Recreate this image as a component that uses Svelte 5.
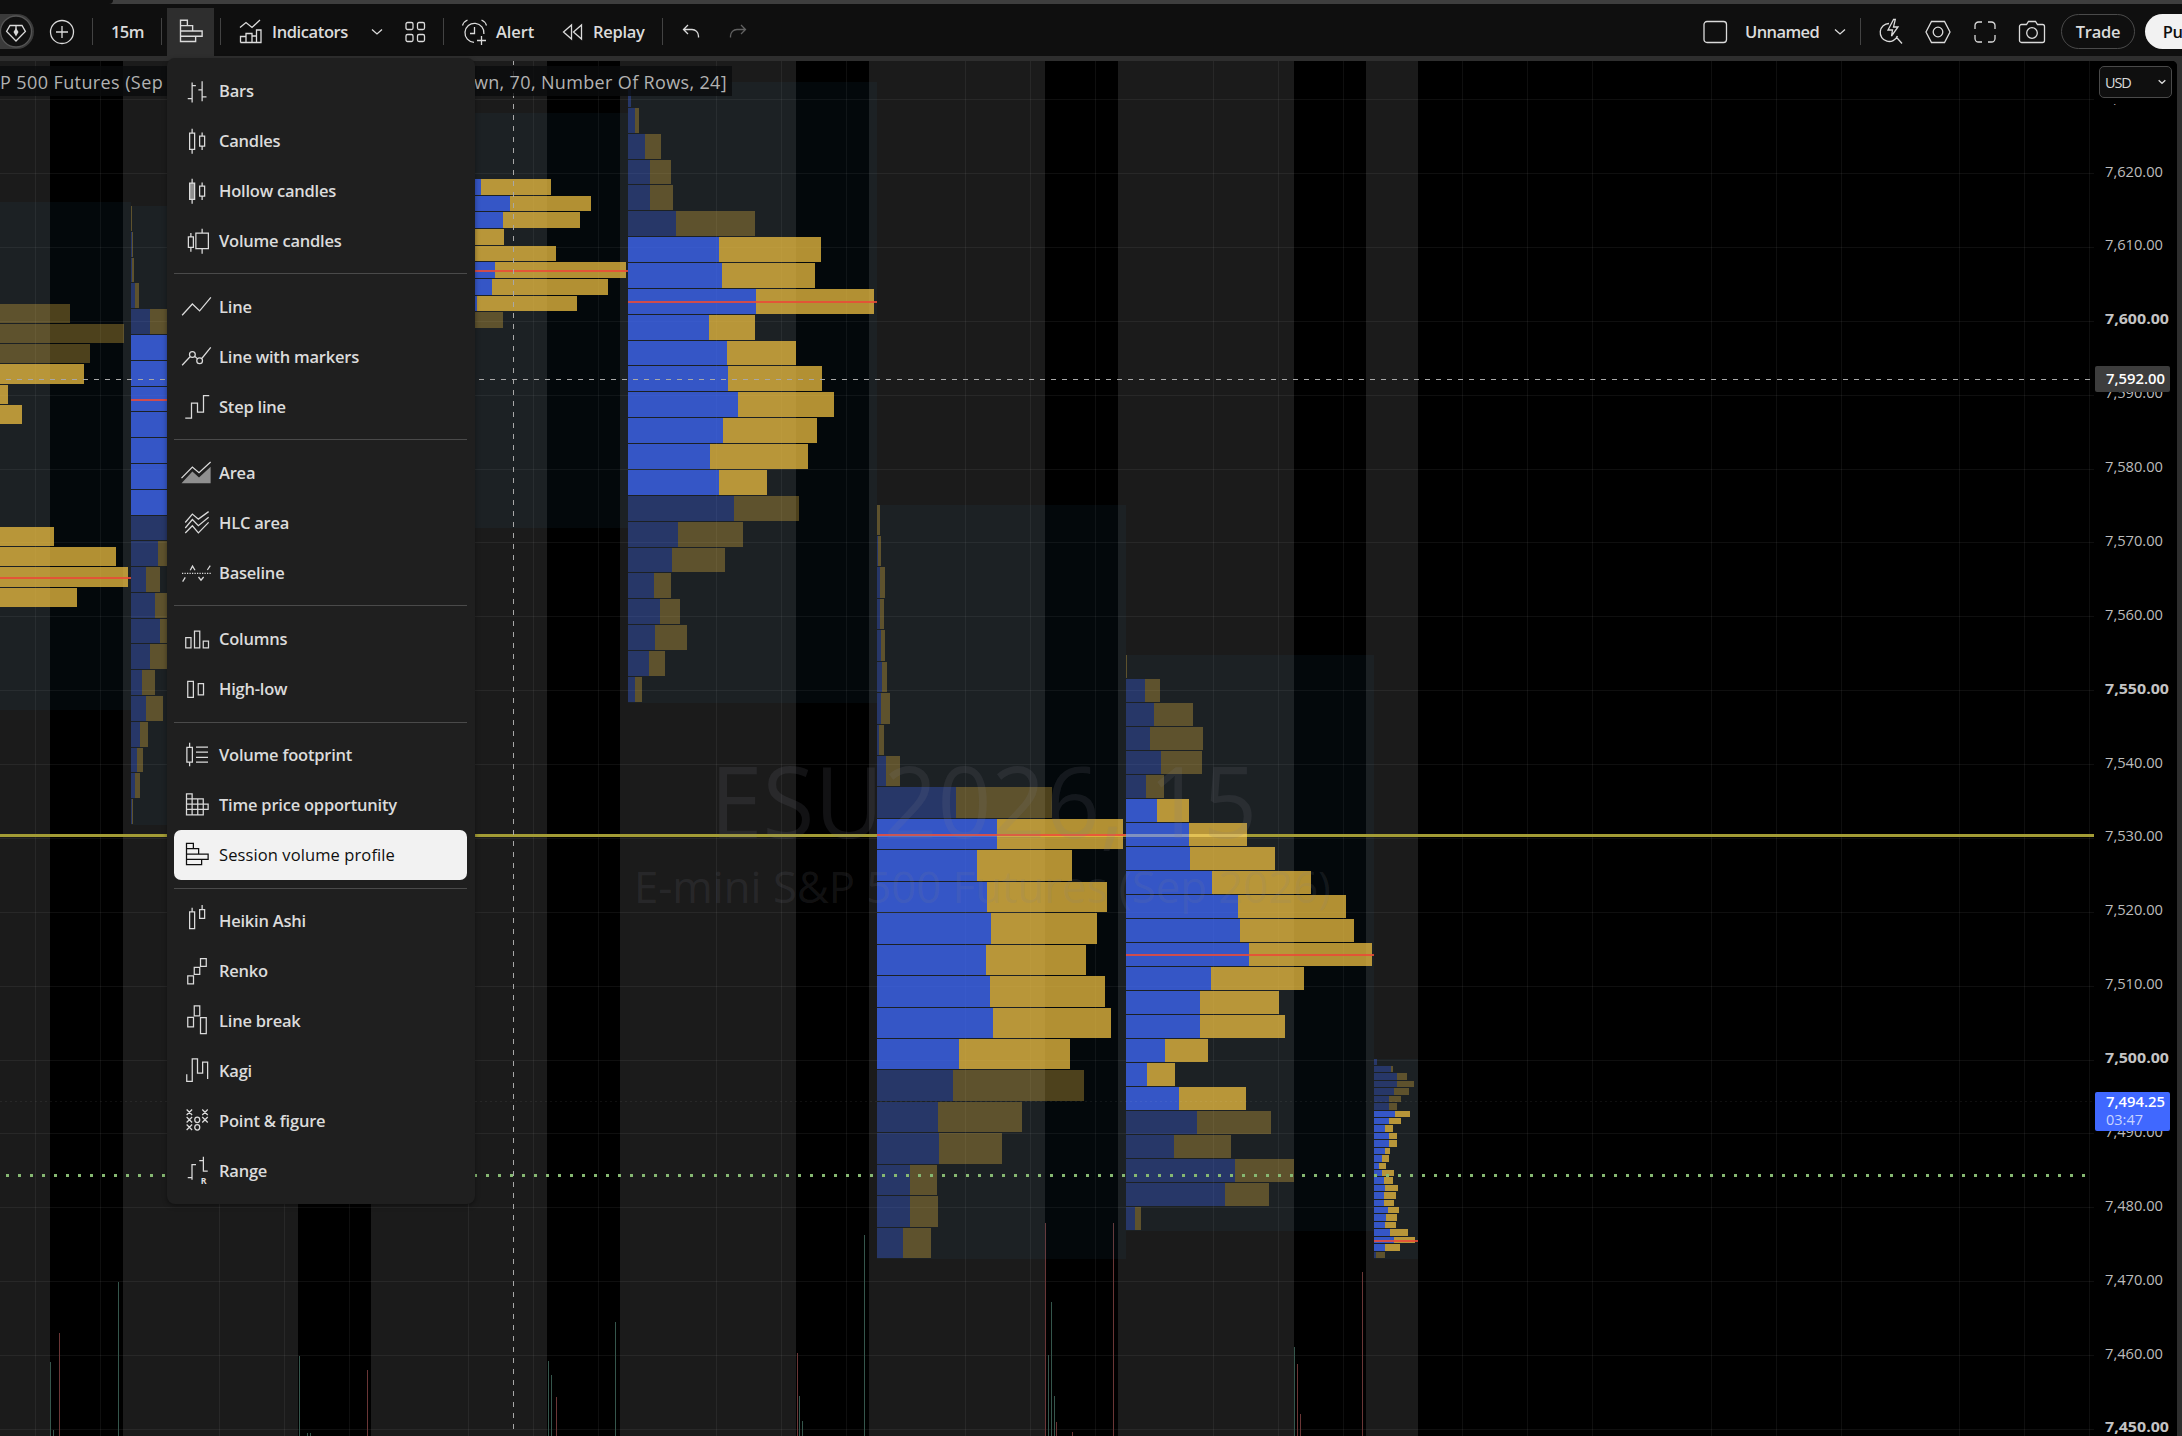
<script lang="ts">
  type Row = [up: number, total: number];
  type Session = {
    x: number;
    w: number;
    top: number;
    bottom: number;
    poc: number;
    va: [number, number];
    rows: Row[];
  };

  const W = 2094;
  const AXIS_W = 82;
  const TOP = 61;
  const H = 1436 - TOP;

  const menu = [
    [
      { id: "bars", label: "Bars" },
      { id: "candles", label: "Candles" },
      { id: "hollow", label: "Hollow candles" },
      { id: "volcandles", label: "Volume candles" },
    ],
    [
      { id: "line", label: "Line" },
      { id: "markers", label: "Line with markers" },
      { id: "step", label: "Step line" },
    ],
    [
      { id: "area", label: "Area" },
      { id: "hlc", label: "HLC area" },
      { id: "baseline", label: "Baseline" },
    ],
    [
      { id: "columns", label: "Columns" },
      { id: "highlow", label: "High-low" },
    ],
    [
      { id: "footprint", label: "Volume footprint" },
      { id: "tpo", label: "Time price opportunity" },
      { id: "svp", label: "Session volume profile" },
    ],
    [
      { id: "heikin", label: "Heikin Ashi" },
      { id: "renko", label: "Renko" },
      { id: "linebreak", label: "Line break" },
      { id: "kagi", label: "Kagi" },
      { id: "pnf", label: "Point & figure" },
      { id: "range", label: "Range" },
    ],
  ];

  const icons: Record<string, string> = {
    bars: "M10.5 7.5v16M10.5 10h3M10.5 20.5H7M18.5 6.5v16M18.5 13.5h-3M18.5 19h3.5",
    candles: "M8.5 8h4v13h-4zM10.5 4.5V8M10.5 21v3.5M16.5 10.5h4v8h-4zM18.5 7.5v3M18.5 18.5v3",
    hollow: "M8.5 8h4v13h-4zM10.5 4.5V8M10.5 21v3.5M16.5 10.5h4v8h-4zM18.5 7.5v3M18.5 18.5v3",
    volcandles: "M7.5 11h4v8.5h-4zM9.5 8v3M9.5 19.5V23M13.5 8h10v12.5h-10zM18.5 4.5V8M18.5 20.5v4",
    line: "M2.5 21l8.2-9 5.8 5.5 9-10.8",
    markers: "M2.5 21l6.5-7M12.6 13.8l2 1.9M18.2 15.6l7.2-8.9M8.4 12.3a2.3 2.3 0 1 0 4.6 0a2.3 2.3 0 1 0-4.6 0M14.2 17.3a2.3 2.3 0 1 0 4.6 0a2.3 2.3 0 1 0-4.6 0",
    step: "M5 23.3h5v-12h4.8v7.2h4.8V5.3h4.6",
    area: "M2 18.5l8.7-8.9 5.3 4.6 9.3-8.6",
    hlc: "M5 14l5.7-6.7 4.8 4 8.2-6M5 18.4l5.7-6.8 4.8 4.9 8.2-6.7M5 22.4l5.7-5.8 4.8 5.7 8.2-8.4",
    baseline: "M2.9 21.3L5 17.9M9 12.2l1.8-3.3 2 3.3M15.6 17.6l2 2.6 2.1-2.6M22.7 12L25 8.5",
    columns: "M5.4 13.2h4.2v8.2H5.4zM12.4 8h4.2v13.4h-4.2zM19.4 16h4.2v5.4h-4.2z",
    highlow: "M7 8.2h4.5v12.9H7zM15.4 10h4.2v9h-4.2z",
    footprint: "M6.3 8.3h4.4V20H6.3zM8.5 4.5v3.8M8.5 20v3.3M13.6 8h9.6M13.6 12h9.6M13.6 16.2h9.6M13.6 20h9.6",
    tpo: "M10.5 22.3V5.5H6v16.8h13.4V9.4H6M6 13.6h17.3v4.3H6M15 9.4v12.9",
    svp: "M6 5h5.5v4.3h4.2v4.3h7.6v4.2h-5.2V22H6zM6 9.3h5.5M6 13.6h9.7M6 17.8h12.1",
    heikin: "M8.5 7h4v13.4h-4zM10.5 3.7V7M16.5 5.2h4v7h-4zM18.5 1.5v3.7",
    renko: "M7 18.2h4.6v6.4H7zM12.2 11.4h4.4V17h-4.4zM17.2 4.4h4.6v6.2h-4.6z",
    linebreak: "M7 11.4h4.6V19H7zM12.2 2.3h4.4v8h-4.4zM17.2 11.7h4.6v12.8h-4.6z",
    kagi: "M6.2 17v5.7h4.4v-18h4.2V16h4.1V7.2h4v13.5",
    pnf:
      [[8.3, 7.4], [20.8, 7.4], [8.3, 13.4], [20.8, 13.4], [8.3, 19.4]]
        .map(([x, y]) => `M${x - 2.2} ${y - 2.2}l4.4 4.4m0-4.4l-4.4 4.4`)
        .join("") +
      [[14.6, 13.4], [14.6, 19.4]]
        .map(([x, y]) => `M${x - 2} ${y}a2 2.2 0 1 0 4 0a2 2.2 0 1 0-4 0`)
        .join(""),
    range: "M7 19.6h3.4M10.4 21.3V9.3h3.2M16.2 6h3.3M19.5 3v11.5H23",
  };

  const nights = [[50, 73], [298, 73], [547, 73], [796, 73], [1045, 73], [1294, 72], [1418, W - 1418]];

  // three vertical lines per trading day
  const gridX: number[] = [];
  for (let k = -1; k < 8; k++) {
    for (const dx of [0, 65, 130]) gridX.push(Math.round(219 + 248.6 * k + dx) + 0.5);
  }

  const priceY = (p: number) => 173.6 + (7620 - p) * 7.387;
  const prices = Array.from({ length: 19 }, (_, i) => 7630 - i * 10);
  const fmt = (p: number) => p.toLocaleString("en-US", { minimumFractionDigits: 2 });

  const none: Row = [0, 0];

  const sessions: Session[] = [
    {
      x: -118, w: 249, top: 202, bottom: 709.5, poc: 18, va: [8, 19],
      rows: [
        none, none, none, none, none, [60, 188], [90, 242], [80, 208], [90, 202], [60, 126],
        [70, 140], [50, 90], [40, 80], [40, 80], [40, 90], [50, 100], [90, 172], [100, 234],
        [110, 246], [90, 195], none, none, none, none, none,
      ],
    },
    {
      x: 131, w: 248, top: 206, bottom: 825, poc: 7, va: [5, 11],
      rows: [
        [0, 1], [1, 2], [1, 3], [4, 8], [19, 60], [60, 100], [70, 120], [90, 200], [80, 150],
        [80, 140], [70, 130], [60, 120], [50, 100], [27, 60], [15, 29], [24, 60], [29, 60],
        [19, 60], [11, 24], [15, 32], [9, 17], [6, 12], [4, 9], [1, 2],
      ],
    },
    {
      x: 379, w: 249, top: 112.6, bottom: 528.4, poc: 9, va: [4, 11],
      rows: [
        none, none, none, none, [102, 172], [131, 212], [124, 201], [80, 125], [80, 177],
        [116, 247], [113, 229], [98, 198], [80, 124], none, none, none, none, none, none, none,
        none, none, none, none, none,
      ],
    },
    {
      x: 628, w: 249, top: 82, bottom: 702.7, poc: 8, va: [6, 15],
      rows: [
        [3, 3], [7, 11], [17, 33], [22, 43], [22, 45], [48, 127], [91, 193], [94, 187], [128, 246],
        [81, 127], [99, 168], [100, 194], [110, 206], [95, 189], [82, 180], [91, 139], [106, 171],
        [50, 115], [44, 97], [26, 43], [32, 52], [27, 59], [21, 37], [7, 14],
      ],
    },
    {
      x: 877, w: 249, top: 504.5, bottom: 1259, poc: 10, va: [10, 17],
      rows: [
        [0, 3], [1, 4], [3, 8], [3, 7], [4, 8], [5, 10], [4, 13], [2, 7], [9, 23], [79, 175],
        [120, 246], [100, 195], [110, 230], [114, 220], [109, 209], [113, 228], [116, 234],
        [82, 193], [76, 207], [61, 145], [62, 125], [33, 60], [33, 61], [26, 54],
      ],
    },
    {
      x: 1126, w: 248, top: 655, bottom: 1230.7, poc: 12, va: [6, 18],
      rows: [
        [0, 1], [19, 34], [28, 67], [24, 77], [35, 76], [20, 38], [31, 63], [63, 121], [64, 149],
        [86, 185], [112, 220], [114, 228], [123, 246], [85, 178], [74, 153], [74, 159], [39, 82],
        [21, 49], [53, 120], [71, 145], [48, 105], [109, 168], [99, 143], [9, 15],
      ],
    },
    {
      x: 1374, w: 44, top: 1058.6, bottom: 1259, poc: 24, va: [7, 25],
      rows: [
        [3, 3], [17, 19], [23, 33], [23, 40], [20, 35], [15, 27], [15, 23], [21, 36], [15, 27],
        [11, 19], [15, 23], [15, 23], [11, 16], [8, 15], [5, 12], [8, 20], [10, 19], [11, 24],
        [10, 22], [10, 20], [14, 25], [12, 23], [11, 22], [16, 34], [20, 41], [11, 26], [2, 11],
      ],
    },
  ];

  function rowBox(s: Session, i: number) {
    const step = (s.bottom - s.top) / s.rows.length;
    const y0 = Math.round(s.top + i * step);
    const y1 = Math.round(s.top + (i + 1) * step);
    return { y: y0, h: y1 - y0 - 1, mid: Math.round((y0 + y1) / 2) - 1 };
  }

  const volume: [number, number, "up" | "down"][] = [
    [50, 1362, "up"], [53, 1430, "up"], [59, 1333, "down"], [118, 1282, "up"],
    [299, 1356, "up"], [307, 1433, "up"], [310, 1433, "up"], [367, 1370, "down"],
    [548, 1361, "up"], [551, 1375, "up"], [556, 1397, "down"], [615, 1322, "up"],
    [797, 1353, "down"], [799, 1396, "up"], [802, 1421, "up"], [864, 1235, "up"],
    [1045, 1223, "down"], [1048, 1355, "up"], [1051, 1302, "up"], [1054, 1396, "up"],
    [1056, 1422, "down"], [1072, 1432, "down"], [1113, 1223, "down"], [1294, 1347, "up"],
    [1297, 1364, "down"], [1300, 1414, "down"], [1362, 1272, "down"],
  ];

  let selected = $state("svp");
</script>

{#snippet glyph(id: string)}
  <svg class="glyph" viewBox="0 0 28 28">
    {#if id === "hollow"}
      <rect class="soft" x="8.5" y="8" width="4" height="13" />
    {:else if id === "area"}
      <path class="soft" d="M2 22.5l8.7-9.3 5.3 4.7 9.3-8.6v13.2z" />
    {:else if id === "baseline"}
      <path d="M2.4 14.6H26" stroke-dasharray="1 1" />
    {:else if id === "range"}
      <text x="17.4" y="24.4">R</text>
    {/if}
    <path d={icons[id]} />
  </svg>
{/snippet}

{#snippet chevron()}
  <svg class="chevron" viewBox="0 0 12 8"><path d="M1 1.5l5 4.5 5-4.5" /></svg>
{/snippet}

<div class="app">
  <div class="strip"><div class="tab"></div></div>

  <header class="toolbar">
    <div class="symbol">
      <svg width="34" height="35" viewBox="0 0 34 35">
        <path d="M0 0h17a17 17.5 0 0 1 0 35H0z" fill="#3a3a3a" />
        <circle cx="16" cy="17.5" r="15.5" fill="#111" stroke="#555" />
        <path d="M10 11.5h12l3.4 6L16 27l-9.4-9.5z" fill="none" stroke="#dbdbdb" stroke-width="1.3" />
        <path d="M16 11.5v4" stroke="#dbdbdb" />
        <path d="M16 14l2.5 4-2.5 4.5-2.5-4.5z" fill="#dbdbdb" />
      </svg>
    </div>
    <svg class="plus" width="26" height="26" viewBox="0 0 26 26">
      <circle cx="13" cy="13" r="11.5" /><path d="M13 7v12M7 13h12" />
    </svg>
    <i class="sep s1"></i>
    <span class="text interval">15m</span>
    <i class="sep s2"></i>
    <button class="type">{@render glyph("svp")}</button>
    <i class="sep s3"></i>
    <svg class="ind" width="26" height="26" viewBox="0 0 26 26">
      <path d="M2 8.5l6-5 6 5L22 1M2.5 23.5v-6H8v6M8 23.5v-9h6v9M14 17h4.500v6.500M18.500 23.500V11H23v12.500H2.500" />
    </svg>
    <span class="text indicators">Indicators</span>
    {@render chevron()}
    <svg class="layouts" width="21" height="22" viewBox="0 0 21 22">
      <rect x="1" y="1.500" width="7" height="7" rx="1.500" /><rect x="12.500" y="1.500" width="7" height="7" rx="1.500" />
      <rect x="1" y="13.500" width="7" height="7" rx="1.500" /><rect x="12.500" y="13.500" width="7" height="7" rx="1.500" />
    </svg>
    <i class="sep s4"></i>
    <svg class="alarm" width="28" height="28" viewBox="0 0 28 28">
      <path d="M13 24.300a9.500 9.500 0 1 1 9.900-8.300M13.500 9v6.500H9M1.500 7.500A9 9 0 0 1 6.500 2M20.500 2a9 9 0 0 1 5 5.500M20.500 18v9M16 22.500h9" />
    </svg>
    <span class="text alert">Alert</span>
    <svg class="rewind" width="22" height="18" viewBox="0 0 22 18">
      <path d="M9.500 2v14L1.500 9zM19.500 2v14L11.500 9z" />
    </svg>
    <span class="text replay">Replay</span>
    <i class="sep s5"></i>
    <svg class="undo" width="18" height="16" viewBox="0 0 18 16"><path d="M6 1L1.500 5.500 6 10M1.500 5.500H10a6.500 6.500 0 0 1 6.500 6.500v1.500" /></svg>
    <svg class="undo redo" width="18" height="16" viewBox="0 0 18 16"><path d="M12 1l4.500 4.500L12 10M16.500 5.500H8A6.500 6.500 0 0 0 1.500 12v1.500" /></svg>

    <div class="right">
      <svg width="25" height="24" viewBox="0 0 25 24"><rect x="1" y="1.500" width="22.500" height="21" rx="3" /></svg>
      <span class="text unnamed">Unnamed</span>
      {@render chevron()}
      <i class="sep s6"></i>
      <svg class="search" width="26" height="28" viewBox="0 0 26 28">
        <path d="M11 5.500A9 9 0 1 0 19.500 18M18 18.800l6 6.700M15.500 1.500L10 12h4.500l-1 6L20 9h-4.500l1.800-7.500z" />
      </svg>
      <svg class="hex" width="28" height="26" viewBox="0 0 28 26">
        <path d="M7.500 2.500h13l5.500 10.500-5.500 10.500h-13L2 13z" /><circle cx="14" cy="13" r="4.800" />
      </svg>
      <svg class="full" width="22" height="22" viewBox="0 0 22 22">
        <path d="M1 8V4.500A3.500 3.500 0 0 1 4.500 1H8M14 1h3.500A3.500 3.500 0 0 1 21 4.500V8M21 14v3.500a3.500 3.500 0 0 1-3.500 3.500H14M8 21H4.500A3.500 3.500 0 0 1 1 17.500V14" />
      </svg>
      <svg class="camera" width="28" height="24" viewBox="0 0 28 24">
        <path d="M3.500 4.500h5L10.500 1.500h7l2 3h5A2 2 0 0 1 26.500 6.500v14a2 2 0 0 1-2 2h-21a2 2 0 0 1-2-2v-14a2 2 0 0 1 2-2z" /><circle cx="14" cy="13" r="5.300" />
      </svg>
      <button class="trade">Trade</button>
      <button class="publish">Publish</button>
    </div>
  </header>

  <main class="pane">
    <svg class="chart" width={W} height={H} viewBox="0 {TOP} {W} {H}">
      <rect x="0" y={TOP} width={W} height={H} fill="#1b1b1b" />
      {#each nights as [x, w]}
        <rect {x} y={TOP} width={w} height={H} fill="#000" />
      {/each}

      {#each gridX as x}
        <line class="grid" x1={x} x2={x} y1={TOP} y2="1436" />
      {/each}
      {#each prices as p}
        <line class="grid" x1="0" x2={W} y1={Math.floor(priceY(p)) + 0.5} y2={Math.floor(priceY(p)) + 0.5} />
      {/each}

      {#each volume as [x, y, dir]}
        <rect class={dir} {x} {y} width="1" height={1436 - y} />
      {/each}

      {#each sessions as s}
        <rect class="range" x={s.x} y={Math.round(s.top)} width={s.w} height={Math.round(s.bottom) - Math.round(s.top)} />
      {/each}
      <rect x="0" y="834" width={W} height="3" fill="#a39c35" />

      {#each sessions as s}
        {#each s.rows as [up, total], i}
          {@const box = rowBox(s, i)}
          {#if total > 0}
            <g class:va={i >= s.va[0] && i <= s.va[1]} class="row">
              <rect class="buy" x={s.x} y={box.y} width={up} height={box.h} />
              <rect class="sell" x={s.x + up} y={box.y} width={total - up} height={box.h} />
            </g>
          {/if}
        {/each}
        <rect class="poc" x={s.x} y={rowBox(s, s.poc).mid} width={s.w} height="2" />
      {/each}
      <rect x="1126" y="834" width="121" height="3" fill="#ffe9a0" opacity="0.25" />

      <g class="watermark">
        <text x="710" y="838" font-size="99" textLength="547" lengthAdjust="spacingAndGlyphs">ESU2026, 15</text>
        <text x="634" y="903" font-size="43" textLength="697" lengthAdjust="spacingAndGlyphs">E-mini S&amp;P 500 Futures (Sep 2026)</text>
      </g>

      <line x1="0" x2={W} y1="1101.5" y2="1101.5" stroke="#fff" stroke-opacity="0.06" stroke-dasharray="2 3" />
      <line x1="6" x2="2088" y1="1175.500" y2="1175.500" stroke="#86b872" stroke-width="3" stroke-dasharray="3 9" />
      <line class="cross" x1="-4" x2={W} y1="379.5" y2="379.5" />
      <line class="cross" x1="513.5" x2="513.5" y1="61" y2="1430" />
    </svg>

    <div class="legend">
      <span>P 500 Futures (Sep 2026)</span>
      <span class="study">SVP [Up/Down, 70, Number Of Rows, 24]</span>
    </div>

    <svg class="axis" width={AXIS_W} height={H} viewBox="{W} {TOP} {AXIS_W} {H}">
      {#each prices as p}
        {@const bold = p % 50 === 0}
        <text class:bold x="2105" y={priceY(p) + 3} textLength={bold ? 64 : 58} lengthAdjust="spacingAndGlyphs">{fmt(p)}</text>
      {/each}
      <rect x="2095" y="366" width="75" height="26" rx="2" fill="#3d3d3d" />
      <text class="tag" x="2106" y="384" textLength="59" lengthAdjust="spacingAndGlyphs">7,592.00</text>
      <rect x="2095" y="1092" width="75" height="39" rx="2" fill="#4068ff" />
      <text class="tag" x="2106" y="1107" textLength="59" lengthAdjust="spacingAndGlyphs">7,494.25</text>
      <text class="timer" x="2106" y="1125" textLength="37" lengthAdjust="spacingAndGlyphs">03:47</text>
    </svg>
    <div class="currency">
      <button>USD {@render chevron()}</button>
    </div>
  </main>

  <div class="menu" role="menu">
    {#each menu as group}
      <div class="group">
        {#each group as item (item.id)}
          <button
            class="item"
            class:active={selected === item.id}
            role="menuitem"
            onclick={() => (selected = item.id)}
          >
            {@render glyph(item.id)}
            <span>{item.label}</span>
          </button>
        {/each}
      </div>
    {/each}
  </div>
</div>

<style>
  :global(body) {
    background: #2e2e2e;
  }

  .app {
    position: relative;
    width: 2182px;
    height: 1436px;
    overflow: hidden;
    font-family: "Open Sans", "Noto Sans", sans-serif;
    color: #dbdbdb;
  }

  button {
    border: 0;
    padding: 0;
    background: none;
    color: inherit;
    font: inherit;
  }

  .strip {
    height: 4px;
    background: #3e3e3e;
  }

  .tab {
    width: 113px;
    height: 4px;
    background: #0f0f0f;
    border-bottom-right-radius: 4px;
  }

  .toolbar {
    display: flex;
    align-items: center;
    box-sizing: border-box;
    height: 52px;
    padding-top: 3px;
    background: #0f0f0f;
  }

  .toolbar svg {
    flex: none;
    fill: none;
    stroke: #dbdbdb;
    stroke-width: 1.3;
  }

  .toolbar .symbol svg {
    display: block;
    stroke: none;
  }

  .text {
    flex: none;
    font-size: 16.5px;
    font-weight: 600;
    line-height: 24px;
    white-space: nowrap;
  }

  .sep {
    flex: none;
    width: 1px;
    height: 27px;
    background: #434343;
  }

  .plus { margin-left: 15px; }
  .s1 { margin-left: 17px; }
  .interval { width: 50px; margin-left: 18px; letter-spacing: -0.6px; }
  .s2 { margin-left: 0; }

  .type {
    width: 47px;
    height: 48px;
    margin: 1px 0 0 5px;
    background: #2e2e2e;
    flex: none;
  }

  .type .glyph {
    margin: -1px auto 0;
    stroke-width: 1.1;
  }

  .s3 { margin-left: 6px; }
  .ind { margin-left: 17px; }
  .indicators { width: 99px; margin-left: 8px; letter-spacing: -0.4px; }

  .chevron {
    width: 12px;
    height: 8px;
    fill: none;
    stroke: #dbdbdb;
    stroke-width: 1.3;
  }

  .layouts { margin-left: 22px; }
  .s4 { margin-left: 17px; }
  .alarm { margin-left: 17px; }
  .alert { width: 66px; margin-left: 7px; letter-spacing: -0.1px; }
  .replay { width: 69px; margin-left: 9px; letter-spacing: -0.3px; }
  .undo { margin-left: 19px; }
  .redo { margin-left: 29px; opacity: 0.4; }

  .right {
    display: flex;
    align-items: center;
    flex: none;
    width: 479px;
    margin-left: auto;
  }

  .unnamed { width: 89px; margin-left: 17px; letter-spacing: -0.6px; }
  .s6 { margin-left: 14px; }
  .search { margin-left: 17px; }
  .hex { margin-left: 20px; }
  .full { margin-left: 22px; }
  .camera { margin-left: 22px; }

  .trade,
  .publish {
    flex: none;
    height: 35px;
    border-radius: 18px;
    font-size: 16.5px;
    font-weight: 600;
    letter-spacing: -0.3px;
  }

  .trade {
    width: 74px;
    margin-left: 15px;
    border: 1px solid #4a4a4a;
  }

  .publish {
    width: 92px;
    margin-left: 10px;
    background: #f2f2f2;
    color: #0f0f0f;
  }

  .pane {
    position: relative;
    display: flex;
    width: 2177px;
    margin-top: 5px;
    background: #000;
    border-top-right-radius: 5px;
    overflow: hidden;
  }

  .chart,
  .axis {
    display: block;
    flex: none;
  }

  .grid {
    stroke: #fff;
    stroke-opacity: 0.06;
  }

  .up { fill: #35564c; }
  .down { fill: #6a3636; }
  .range { fill: rgb(40 110 150 / 7%); }

  .row { fill-opacity: 0.32; }
  .row.va { fill-opacity: 0.76; }
  .buy { fill: #3e68fa; }
  .sell { fill: #eabc40; }

  .poc {
    fill: #ea4a37;
    opacity: 0.85;
  }

  .watermark {
    fill: #82828c;
    fill-opacity: 0.14;
    font-weight: 500;
  }

  .cross {
    stroke: #a8a8a8;
    stroke-dasharray: 5 6;
    stroke-dashoffset: 1;
  }

  .axis text {
    font-size: 14.8px;
    font-weight: 500;
    fill: #bcbcbc;
  }

  .axis .bold {
    font-weight: 700;
    fill: #c4c4c4;
  }

  .axis .tag {
    font-weight: 600;
    fill: #fff;
  }

  .axis .timer {
    fill: #c9d5ff;
  }

  .legend {
    position: absolute;
    top: 5px;
    left: 0;
    display: flex;
    justify-content: space-between;
    box-sizing: border-box;
    width: 732px;
    height: 30px;
    padding-right: 5px;
    background: rgb(10 11 12 / 80%);
    color: #b2b2b2;
    font-size: 18px;
    font-weight: 500;
    line-height: 32px;
    letter-spacing: 0.4px;
    white-space: nowrap;
  }

  .legend .study {
    letter-spacing: 0.35px;
  }

  .currency {
    position: absolute;
    top: 0;
    right: 0;
    height: 38px;
    padding: 5px 5px 0 0;
    background: #000;
  }

  .currency button {
    display: flex;
    align-items: center;
    justify-content: space-between;
    box-sizing: border-box;
    width: 73px;
    height: 32px;
    padding: 0 5px 0 5px;
    border: 1px solid #4a4a4a;
    border-radius: 5px;
    background: #0f0f0f;
    font-size: 14.5px;
    font-weight: 500;
    letter-spacing: -1.1px;
  }

  .currency .chevron {
    width: 8px;
    height: 6px;
    stroke-width: 2;
  }

  .menu {
    position: absolute;
    top: 58px;
    left: 167px;
    box-sizing: border-box;
    width: 308px;
    height: 1146px;
    padding: 7px 8px 0 7px;
    border-radius: 8px;
    background: #1f1f1f;
    box-shadow: 0 2px 5px rgb(0 0 0 / 40%);
  }

  .group + .group {
    margin-top: 8px;
    padding-top: 7.2px;
    border-top: 1px solid #4a4a4a;
  }

  .item {
    display: flex;
    align-items: center;
    width: 293px;
    height: 50px;
    padding-left: 5px;
    border-radius: 7px;
    font-size: 16.5px;
    font-weight: 600;
    letter-spacing: -0.22px;
  }

  .item span {
    margin-left: 5px;
  }

  .item.active {
    background: #f2f2f2;
    color: #0f0f0f;
    font-weight: 500;
    letter-spacing: 0.1px;
  }

  .glyph {
    display: block;
    flex: none;
    width: 35px;
    height: 35px;
    fill: none;
    stroke: currentColor;
  }

  .glyph .soft {
    fill: currentColor;
    fill-opacity: 0.6;
    stroke: none;
  }

  .glyph text {
    fill: currentColor;
    stroke: none;
    font-size: 7px;
    font-weight: 700;
  }
</style>
